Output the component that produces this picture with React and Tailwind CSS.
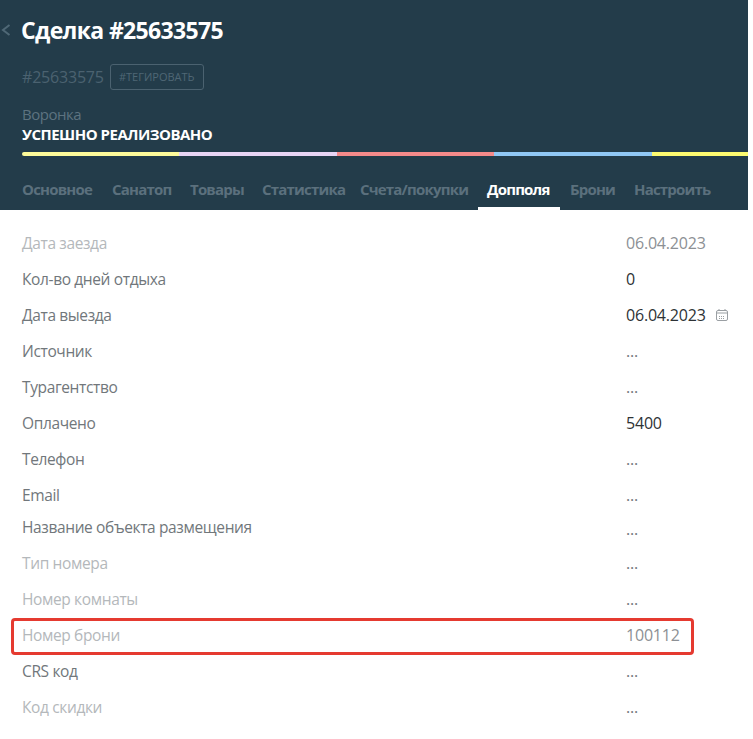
import React from "react";

const tabs = [
    { name: "Основное", width: "w-[90px]" },
    { name: "Санатоп", width: "w-[78px]" },
    { name: "Товары", width: "w-[72px]" },
    { name: "Статистика", width: "w-[98px]" },
    { name: "Счета/покупки", width: "w-[118px] mr-[9px]" },
    { name: "Допполя", width: "w-[82px] mr-[1px]" },
    { name: "Брони", width: "w-[64px]" },
    { name: "Настроить", width: "w-[94px]" },
];

const rows = [
    { label: "Дата заезда", value: "06.04.2023", muted: true },
    { label: "Кол-во дней отдыха", value: "0" },
    { label: "Дата выезда", value: "06.04.2023", calendar: true },
    { label: "Источник", value: "..." },
    { label: "Турагентство", value: "..." },
    { label: "Оплачено", value: "5400" },
    { label: "Телефон", value: "..." },
    { label: "Email", value: "..." },
    { label: "Название объекта размещения", value: "...", short: true },
    { label: "Тип номера", value: "...", muted: true },
    { label: "Номер комнаты", value: "...", muted: true },
    { label: "Номер брони", value: "100112", muted: true, marked: true },
    { label: "CRS код", value: "..." },
    { label: "Код скидки", value: "...", muted: true },
];

const CalendarIcon = () => (
    <svg width="12" height="12" viewBox="0 0 12 12" fill="none" stroke="#9a9fa3" strokeWidth="1" className="ml-[10px]">
        <rect x="0.5" y="1.5" width="11" height="10" rx="1.5" />
        <path d="M3 0v2M9 0v2M1 4h10" />
        <path d="M3 7.5h6M3 9.5h6" strokeDasharray="1 1" />
    </svg>
);

const Row = ({ row }) => {
    const labelColor = row.muted ? "text-[#b4b8bb]" : "text-[#71777b]";
    let valueColor = "text-[#2d3235]";
    if (row.muted) valueColor = "text-[#8c9094]";
    if (row.value === "...") valueColor = "text-[#71777b]";
    return (
        <div className={`relative flex items-center ${row.short ? "h-[32px]" : "h-[36px]"}`}>
            <div className={`w-[604px] text-[15.5px] tracking-[-0.37px] ${row.short ? "pb-[2px]" : "pt-[2px]"} ${labelColor}`}>
                {row.label}
            </div>
            <div className={`flex items-center text-[16px] tracking-[-0.2px] ${valueColor}`}>
                {row.value}
                {row.calendar && <CalendarIcon />}
            </div>
            {row.marked && (
                <div className="absolute left-[-11px] top-[1px] w-[683px] h-[37px] border-[3px] border-[#e53a30] rounded-[4px]" />
            )}
        </div>
    );
};

const App = () => {
    return (
        <div className="w-[753px] h-[739px] bg-white overflow-hidden font-['Open_Sans','Noto_Sans',sans-serif] text-[15px] tracking-[-0.5px]">
            <div className="w-[748px] h-[210px] bg-[#233c4a] pt-[14px] overflow-hidden">
                <div className="flex items-center h-[32px]">
                    <svg width="10" height="12" viewBox="0 0 10 12" fill="none" stroke="#4f6876" strokeWidth="2" className="ml-[1px] mr-[10px]">
                        <path d="M8.5 1 2 6l6.5 5" />
                    </svg>
                    <h1 className="text-[23px] font-bold tracking-[-0.65px] text-white">Сделка #25633575</h1>
                </div>
                <div className="flex items-center mt-[18px] ml-[22px]">
                    <span className="text-[16px] tracking-[-0.2px] text-[#4b6270]">#25633575</span>
                    <span className="ml-[6px] h-[26px] w-[94px] flex items-center justify-center border border-[#4b6270] rounded-[3px] text-[11px] tracking-normal text-[#4f6775]">
                        #ТЕГИРОВАТЬ
                    </span>
                </div>
                <div className="ml-[22px] mt-[14px] leading-[20px] text-[#5d7380]">Воронка</div>
                <div className="ml-[22px] mt-[1px] leading-[18px] font-bold text-white">УСПЕШНО РЕАЛИЗОВАНО</div>
                <div className="ml-[22px] mt-[9px] flex h-[4px]">
                    <div className="w-[157px] bg-[#fdfb9a] rounded-l-[2px]" />
                    <div className="w-[158px] bg-[#e8d5f5]" />
                    <div className="w-[157px] bg-[#f58a8a]" />
                    <div className="w-[158px] bg-[#90c8f5]" />
                    <div className="flex-1 bg-[#fdfb70]" />
                </div>
                <div className="flex ml-[13px] mt-[20px] font-bold tracking-[-0.8px]">
                    {tabs.map((tab) => (
                        <div
                            key={tab.name}
                            className={`h-[34px] pl-[9px] leading-[26px] whitespace-nowrap ${tab.width} ${
                                tab.name === "Допполя" ? "text-white border-b-[3px] border-white" : "text-[#5b707d]"
                            }`}
                        >
                            {tab.name}
                        </div>
                    ))}
                </div>
            </div>
            <div className="pt-[15px] pl-[22px]">
                {rows.map((row) => (
                    <Row key={row.label} row={row} />
                ))}
            </div>
        </div>
    );
};

export default App;
